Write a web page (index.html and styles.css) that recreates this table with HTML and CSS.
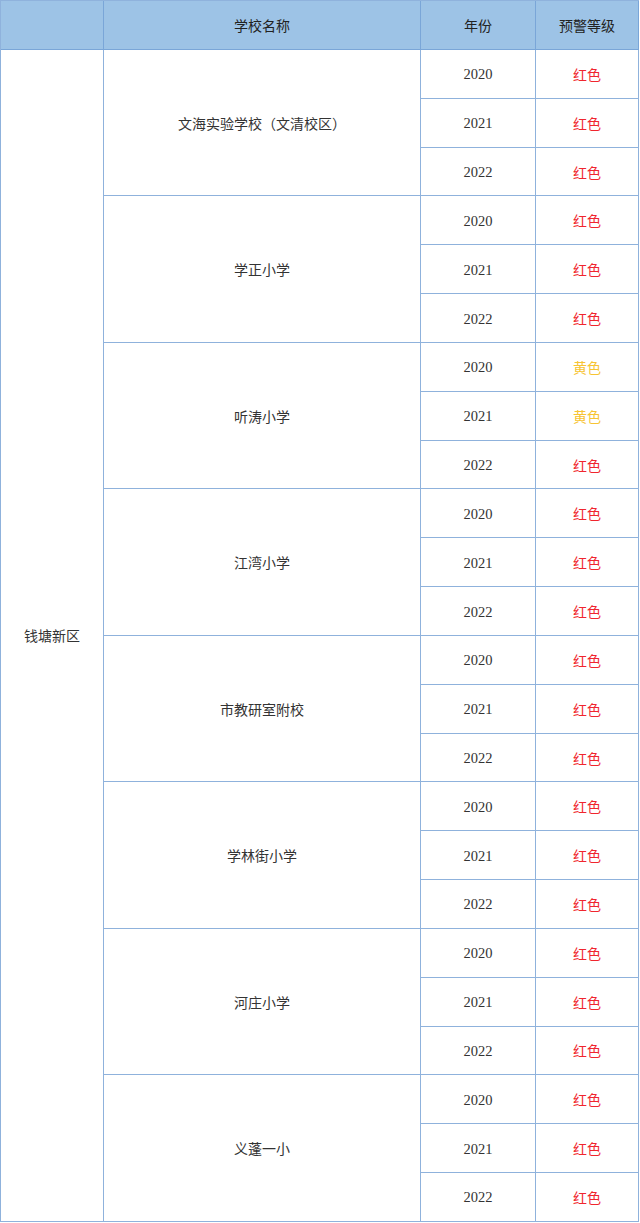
FILE: index.html
```html
<!DOCTYPE html>
<html lang="zh">
<head>
<meta charset="utf-8">
<link rel="stylesheet" href="styles.css">
</head>
<body>
<div class="grid">
  <div class="cell head"></div>
  <div class="cell head">学校名称</div>
  <div class="cell head">年份</div>
  <div class="cell head">预警等级</div>

  <div class="cell region">钱塘新区</div>

  <div class="cell school">文海实验学校（文清校区）</div>
  <div class="cell year">2020</div><div class="cell red">红色</div>
  <div class="cell year">2021</div><div class="cell red">红色</div>
  <div class="cell year">2022</div><div class="cell red">红色</div>

  <div class="cell school">学正小学</div>
  <div class="cell year">2020</div><div class="cell red">红色</div>
  <div class="cell year">2021</div><div class="cell red">红色</div>
  <div class="cell year">2022</div><div class="cell red">红色</div>

  <div class="cell school">听涛小学</div>
  <div class="cell year">2020</div><div class="cell yellow">黄色</div>
  <div class="cell year">2021</div><div class="cell yellow">黄色</div>
  <div class="cell year">2022</div><div class="cell red">红色</div>

  <div class="cell school">江湾小学</div>
  <div class="cell year">2020</div><div class="cell red">红色</div>
  <div class="cell year">2021</div><div class="cell red">红色</div>
  <div class="cell year">2022</div><div class="cell red">红色</div>

  <div class="cell school">市教研室附校</div>
  <div class="cell year">2020</div><div class="cell red">红色</div>
  <div class="cell year">2021</div><div class="cell red">红色</div>
  <div class="cell year">2022</div><div class="cell red">红色</div>

  <div class="cell school">学林街小学</div>
  <div class="cell year">2020</div><div class="cell red">红色</div>
  <div class="cell year">2021</div><div class="cell red">红色</div>
  <div class="cell year">2022</div><div class="cell red">红色</div>

  <div class="cell school">河庄小学</div>
  <div class="cell year">2020</div><div class="cell red">红色</div>
  <div class="cell year">2021</div><div class="cell red">红色</div>
  <div class="cell year">2022</div><div class="cell red">红色</div>

  <div class="cell school">义蓬一小</div>
  <div class="cell year">2020</div><div class="cell red">红色</div>
  <div class="cell year">2021</div><div class="cell red">红色</div>
  <div class="cell year">2022</div><div class="cell red">红色</div>
</div>
</body>
</html>
```
FILE: styles.css
```css
html, body {
  margin: 0;
  padding: 0;
  background: #ffffff;
}
.grid {
  display: grid;
  width: 639px;
  box-sizing: border-box;
  grid-template-columns: 103px 317px 115px 103px;
  grid-template-rows: 49px repeat(24, 48.83px);
  border-left: 1px solid #8fb2dc;
  border-top: 1px solid #8fb2dc;
  font-family: "Noto Sans CJK SC", "Liberation Sans", sans-serif;
  font-size: 14px;
  color: #333333;
}
.cell {
  display: flex;
  align-items: center;
  justify-content: center;
  border-right: 1px solid #8fb2dc;
  border-bottom: 1px solid #8fb2dc;
  box-sizing: border-box;
  min-width: 0;
}
.head {
  background: #9dc3e6;
  color: #222222;
  border-color: #7aa6d8;
}
.region {
  grid-column: 1;
  grid-row: 2 / span 24;
}
.school {
  grid-column: 2;
  grid-row: span 3;
}
.year {
  grid-column: 3;
  padding-top: 2px;
  font-family: "Liberation Serif", "DejaVu Serif", serif;
  font-size: 14.5px;
  color: #333333;
}
.red {
  grid-column: 4;
  color: #f0262e;
}
.yellow {
  grid-column: 4;
  color: #f7c433;
}
```
